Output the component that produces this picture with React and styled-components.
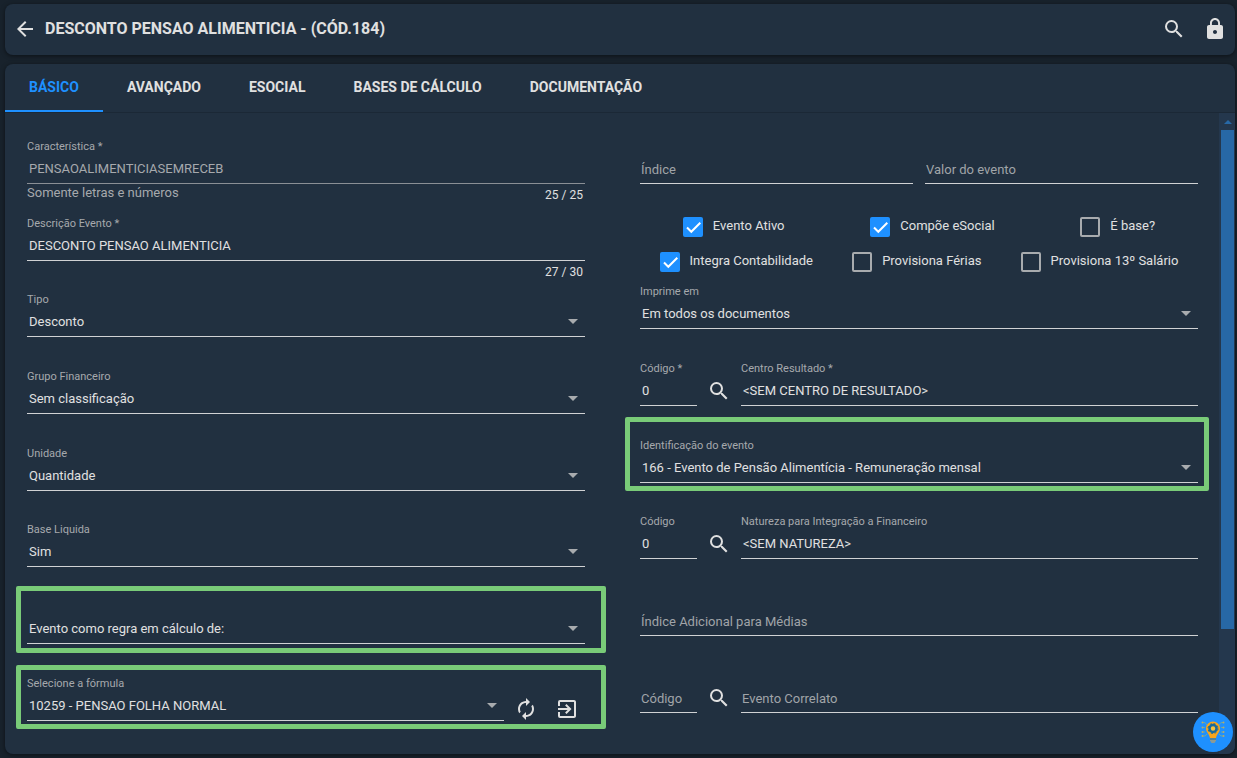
import React from "react";
import styled, { createGlobalStyle, css } from "styled-components";
import { MdArrowBack, MdSearch, MdAutorenew, MdExitToApp } from "react-icons/md";

const GlobalStyle = createGlobalStyle`
  *, *::before, *::after { box-sizing: border-box; }
  body {
    margin: 0;
    background: #18222c;
    color: #e0e0e0;
    font-family: Roboto, "Liberation Sans", sans-serif;
    font-size: 13px;
  }
  button, input, select { font: inherit; color: inherit; }
`;

const Page = styled.div`
  display: flex;
  flex-direction: column;
  gap: 9px;
  min-height: 100vh;
  padding: 4px 2px 4px 5px;
`;

const surface = css`
  background: #213040;
  border-radius: 8px;
  box-shadow: 0 1px 4px rgba(0, 0, 0, 0.5);
`;

const Header = styled.header`
  ${surface}
  display: flex;
  align-items: center;
  gap: 8px;
  height: 51px;
  padding: 0 8px 1px;
`;

const Title = styled.h1`
  flex: 1;
  margin: 0;
  font-size: 16px;
  font-weight: 700;
  line-height: 24px;
`;

const HeaderActions = styled.div`
  display: flex;
  gap: 17px;
`;

const IconButton = styled.button`
  display: flex;
  flex: none;
  padding: 0;
  border: 0;
  background: none;
  color: #e0e0e0;
  cursor: pointer;
`;

const Panel = styled.main`
  ${surface}
  display: flex;
  flex-direction: column;
  flex: 1;
  overflow: hidden;
`;

const Tabs = styled.nav`
  display: flex;
  border-bottom: 1px solid #1b2836;
`;

const Tab = styled.button`
  height: 48px;
  padding: 0 24px;
  border: 0;
  border-bottom: 2px solid ${(p) => (p.$active ? "#1e90ff" : "transparent")};
  background: none;
  color: ${(p) => (p.$active ? "#1e90ff" : "#e0e0e0")};
  font-size: 14px;
  font-weight: 700;
  cursor: pointer;
`;

const Body = styled.div`
  display: flex;
  flex: 1;
`;

const Form = styled.form`
  display: flex;
  flex: 1;
  gap: 55px;
  padding: 25px 21px 13px 22px;
`;

const Column = styled.div`
  display: flex;
  flex: 1;
  flex-direction: column;
  gap: 10px;
  min-width: 0;
`;

const Group = styled.div`
  display: flex;
  flex-direction: column;
  gap: 11px;
`;

const FieldBox = styled.div`
  display: flex;
  flex-direction: column;
  flex: ${(p) => (p.$narrow ? "0 0 57px" : "1 1 auto")};
  min-width: 0;
  min-height: 66px;
`;

const Label = styled.label`
  height: 21px;
  color: #a6a9ad;
  font-size: 11px;
  line-height: 18px;
`;

const Control = styled.div`
  position: relative;
  height: 25px;
  padding-bottom: 4px;
  border-bottom: 1px solid ${(p) => (p.$dim ? "#8a8f95" : "#d0d2d4")};
`;

const entry = css`
  display: block;
  width: 100%;
  height: 20px;
  padding: 0 2px;
  border: 0;
  outline: 0;
  background: transparent;
  line-height: 20px;
`;

const Input = styled.input`
  ${entry}
  &:disabled { color: #a6a9ad; }
  &::placeholder { color: #a0a4a8; opacity: 1; }
  &:placeholder-shown { padding: 2px 1px 0; }
`;

const Select = styled.select`
  ${entry}
  appearance: none;
  option { background: #213040; }
`;

const Caret = styled.svg`
  position: absolute;
  top: 7px;
  right: 7px;
  pointer-events: none;
`;

const Footer = styled.div`
  display: flex;
  justify-content: space-between;
  height: 20px;
  line-height: 17px;
`;

const Hint = styled.span`
  color: #a6a9ad;
`;

const Counter = styled.span`
  margin-left: auto;
  padding: 3px 2px 0 0;
  font-size: 12px;
`;

const Row = styled.div`
  display: flex;
  gap: ${(p) => p.$gap || 0}px;
`;

const LookupButton = styled(IconButton)`
  justify-content: center;
  width: 44px;
  height: 24px;
  margin-top: 19px;
`;

const FormulaActions = styled.div`
  display: flex;
  gap: 17px;
  padding: 22px 6px 0 10px;
`;

const outlineInsets = {
  rule: "-12px -21px 11px -11px",
  formula: "-10px -21px 12px -11px",
  event: "-20px -11px 12px -15px",
};

const Highlight = styled.div`
  position: relative;
  &::after {
    content: "";
    position: absolute;
    inset: ${(p) => outlineInsets[p.$kind]};
    border: 5px solid #79cb78;
    border-radius: 2px;
    pointer-events: none;
  }
`;

const Checks = styled.div`
  display: flex;
  flex-direction: column;
  padding: 5px 0 4px;
`;

const CheckRow = styled.div`
  display: flex;
  align-items: center;
  justify-content: space-around;
  height: 35px;
`;

const CheckLabel = styled.label`
  display: flex;
  gap: 10px;
  line-height: 18px;
`;

const CheckBox = styled.input`
  appearance: none;
  width: 20px;
  height: 20px;
  margin: 0;
  border: 2px solid #a8abae;
  border-radius: 2px;
  &:checked {
    border: 0;
    background: #1e90ff url("data:image/svg+xml,%3Csvg xmlns='http://www.w3.org/2000/svg' viewBox='0 0 20 20'%3E%3Cpath d='M4 10.500l4.300 4.300 9-9' fill='none' stroke='white' stroke-width='2'/%3E%3C/svg%3E");
  }
`;

const ScrollTrack = styled.div`
  display: flex;
  flex-direction: column;
  flex: none;
  align-items: center;
  width: 16px;
  padding: 7px 1px 0 2px;
  background: #24374d;
`;

const ScrollThumb = styled.div`
  width: 13px;
  height: calc(79% - 2px);
  margin-top: 6px;
  background: #2768a6;
`;

const HelpButton = styled.button`
  position: fixed;
  right: 4px;
  bottom: 6px;
  display: grid;
  place-items: center;
  width: 40px;
  height: 40px;
  padding: 0;
  border: 0;
  border-radius: 50%;
  background: #1e90ff;
  cursor: pointer;
`;

function TextField({ id, label, value, placeholder, disabled, narrow, hint, counter }) {
  return (
    <FieldBox $narrow={narrow}>
      <Label htmlFor={id}>{label}</Label>
      <Control $dim={disabled}>
        <Input
          id={id}
          defaultValue={value}
          placeholder={placeholder}
          aria-label={placeholder}
          disabled={disabled}
        />
      </Control>
      {counter && (
        <Footer>
          {hint && <Hint>{hint}</Hint>}
          <Counter>{counter}</Counter>
        </Footer>
      )}
    </FieldBox>
  );
}

function SelectField({ id, label, value }) {
  return (
    <FieldBox>
      <Label htmlFor={id}>{label}</Label>
      <Control>
        <Select id={id} aria-label={label ? undefined : value}>
          <option>{value}</option>
        </Select>
        <Caret width="10" height="5" viewBox="0 0 10 5" aria-hidden="true">
          <path d="M0 0h10L5 5z" fill="#a8abae" />
        </Caret>
      </Control>
    </FieldBox>
  );
}

function LookupRow({ id, code, target, codeValue, targetValue }) {
  const filled = codeValue !== undefined;
  const props = (text, value) => (filled ? { label: text, value } : { placeholder: text });
  return (
    <Row>
      <TextField narrow id={`${id}-codigo`} {...props(code, codeValue)} />
      <LookupButton type="button" aria-label={`Pesquisar ${target}`}>
        <MdSearch size={24} />
      </LookupButton>
      <TextField id={`${id}-nome`} {...props(target, targetValue)} />
    </Row>
  );
}

function Check({ label, checked }) {
  return (
    <CheckLabel>
      <CheckBox type="checkbox" defaultChecked={checked} />
      {label}
    </CheckLabel>
  );
}

function LockIcon() {
  return (
    <svg width="24" height="24" viewBox="0 0 24 24" fill="currentColor" aria-hidden="true">
      <path d="M18 8h-1V6c0-2.760-2.240-5-5-5S7 3.240 7 6v2H6c-1.100 0-2 .9-2 2v10c0 1.100.9 2 2 2h12c1.100 0 2-.9 2-2V10c0-1.100-.9-2-2-2zm-6 9c-1.100 0-2-.9-2-2s.9-2 2-2 2 .9 2 2-.9 2-2 2zm3.100-9H8.900V6c0-1.710 1.390-3.100 3.100-3.100s3.100 1.390 3.100 3.100v2z" />
    </svg>
  );
}

function IdeaIcon() {
  return (
    <svg width="24" height="24" viewBox="0 0 24 24" fill="none" aria-hidden="true">
      <path
        d="M2 2.500h2L6 5M1.500 7.500H4M1.500 12H4M2 16h2l2-2M22 2.500h-2L18 5M22.500 7.500H20M22.500 12H20M22 16h-2l-2-2"
        stroke="#6fa6a0"
      />
      <g fill="#b3ac6c">
        <circle cx="1.500" cy="2.500" r="1" /><circle cx="1.500" cy="7.500" r="1" />
        <circle cx="1.500" cy="12" r="1" /><circle cx="1.500" cy="16" r="1" />
        <circle cx="22.500" cy="2.500" r="1" /><circle cx="22.500" cy="7.500" r="1" />
        <circle cx="22.500" cy="12" r="1" /><circle cx="22.500" cy="16" r="1" />
      </g>
      <path d="M12 1.500A7 7 0 0 0 5 8.500c0 4 3.500 5 4 10h6c.5-5 4-6 4-10a7 7 0 0 0-7-7z" fill="#f9a51a" />
      <circle cx="12" cy="8.500" r="3.500" stroke="#176a9c" strokeWidth="2.500" fill="#f6c23c" />
      <circle cx="12" cy="8.500" r="5" stroke="#176a9c" strokeWidth="1" strokeDasharray="2 1.927" />
      <path d="M9 18.500h6v2L13.500 23h-3L9 20.500z" fill="#8d9a94" />
      <path d="M9 19h6" stroke="#176a9c" />
    </svg>
  );
}

const tabs = ["BÁSICO", "AVANÇADO", "ESOCIAL", "BASES DE CÁLCULO", "DOCUMENTAÇÃO"];

export default function App() {
  return (
    <>
      <GlobalStyle />
      <Page>
        <Header>
          <IconButton type="button" aria-label="Voltar"><MdArrowBack size={24} /></IconButton>
          <Title>DESCONTO PENSAO ALIMENTICIA - (CÓD.184)</Title>
          <HeaderActions>
            <IconButton type="button" aria-label="Pesquisar"><MdSearch size={24} /></IconButton>
            <IconButton type="button" aria-label="Bloquear"><LockIcon /></IconButton>
          </HeaderActions>
        </Header>

        <Panel>
          <Tabs>
            {tabs.map((name, i) => (
              <Tab key={name} type="button" $active={i === 0}>{name}</Tab>
            ))}
          </Tabs>
          <Body>
            <Form>
              <Column>
                <Group>
                  <TextField id="caracteristica" label="Característica *" value="PENSAOALIMENTICIASEMRECEB" disabled hint="Somente letras e números" counter="25 / 25" />
                  <TextField id="descricao" label="Descrição Evento *" value="DESCONTO PENSAO ALIMENTICIA" counter="27 / 30" />
                </Group>
                <Group>
                  <SelectField id="tipo" label="Tipo" value="Desconto" />
                  <SelectField id="grupo" label="Grupo Financeiro" value="Sem classificação" />
                  <SelectField id="unidade" label="Unidade" value="Quantidade" />
                </Group>
                <Group>
                  <SelectField id="base" label="Base Liquida" value="Sim" />
                  <Highlight $kind="rule">
                    <SelectField id="regra" value="Evento como regra em cálculo de:" />
                  </Highlight>
                  <Highlight $kind="formula">
                    <Row>
                      <SelectField id="formula" label="Selecione a fórmula" value="10259 - PENSAO FOLHA NORMAL" />
                      <FormulaActions>
                        <IconButton type="button" aria-label="Atualizar fórmula"><MdAutorenew size={24} /></IconButton>
                        <IconButton type="button" aria-label="Abrir fórmula"><MdExitToApp size={24} /></IconButton>
                      </FormulaActions>
                    </Row>
                  </Highlight>
                </Group>
              </Column>

              <Column>
                <div>
                  <Row $gap={12}>
                    <TextField id="indice" placeholder="Índice" />
                    <TextField id="valor" placeholder="Valor do evento" />
                  </Row>
                  <Checks>
                    <CheckRow>
                      <Check label="Evento Ativo" checked />
                      <Check label="Compõe eSocial" checked />
                      <Check label="É base?" />
                    </CheckRow>
                    <CheckRow>
                      <Check label="Integra Contabilidade" checked />
                      <Check label="Provisiona Férias" />
                      <Check label="Provisiona 13º Salário" />
                    </CheckRow>
                  </Checks>
                  <Group>
                    <SelectField id="imprime" label="Imprime em" value="Em todos os documentos" />
                    <LookupRow id="centro" code="Código *" codeValue="0" target="Centro Resultado *" targetValue="<SEM CENTRO DE RESULTADO>" />
                    <Highlight $kind="event">
                      <SelectField id="identificacao" label="Identificação do evento" value="166 - Evento de Pensão Alimentícia - Remuneração mensal" />
                    </Highlight>
                  </Group>
                </div>
                <Group>
                  <LookupRow id="natureza" code="Código" codeValue="0" target="Natureza para Integração a Financeiro" targetValue="<SEM NATUREZA>" />
                  <TextField id="adicional" placeholder="Índice Adicional para Médias" />
                  <LookupRow id="correlato" code="Código" target="Evento Correlato" />
                </Group>
              </Column>
            </Form>
            <ScrollTrack aria-hidden="true">
              <svg width="8" height="4" viewBox="0 0 8 4"><path d="M0 4L4 0l4 4z" fill="#2768a6" /></svg>
              <ScrollThumb />
            </ScrollTrack>
          </Body>
        </Panel>
      </Page>
      <HelpButton type="button" aria-label="Ajuda"><IdeaIcon /></HelpButton>
    </>
  );
}
